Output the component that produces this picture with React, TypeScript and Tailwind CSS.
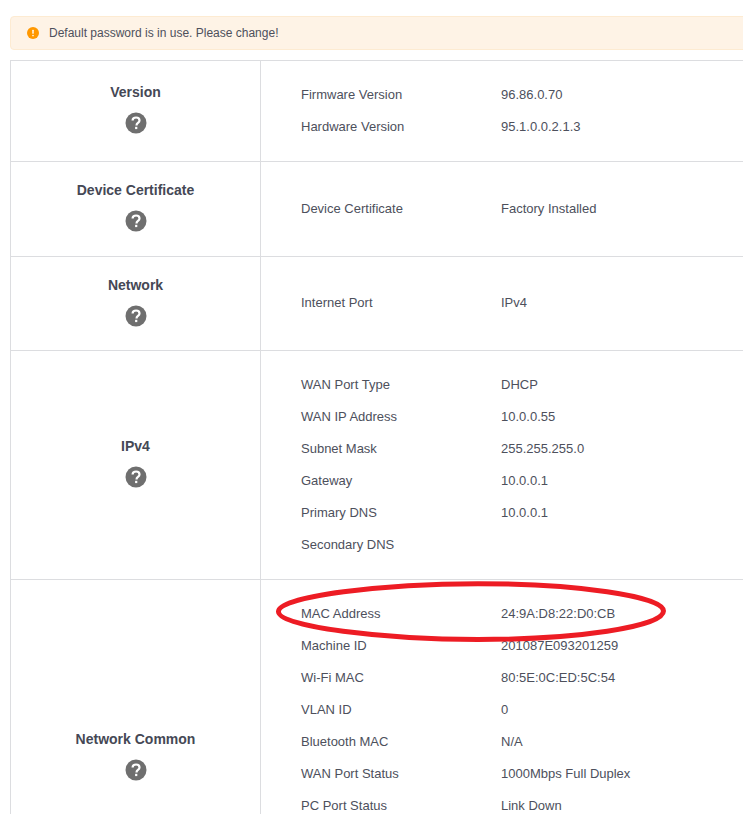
export default function App() {
  const sections = [
    { title: "Version", rowClass: "h-[101px]", leftClass: "pb-[7px]", rightClass: "", rows: [["Firmware Version", "96.86.0.70"], ["Hardware Version", "95.1.0.0.2.1.3"]] },
    { title: "Device Certificate", rowClass: "h-[95px]", leftClass: "pb-[7px]", rightClass: "", rows: [["Device Certificate", "Factory Installed"]] },
    { title: "Network", rowClass: "h-[94px]", leftClass: "pb-[5px]", rightClass: "pb-[2px]", rows: [["Internet Port", "IPv4"]] },
    { title: "IPv4", rowClass: "h-[229px]", leftClass: "pb-[7px]", rightClass: "", rows: [["WAN Port Type", "DHCP"], ["WAN IP Address", "10.0.0.55"], ["Subnet Mask", "255.255.255.0"], ["Gateway", "10.0.0.1"], ["Primary DNS", "10.0.0.1"], ["Secondary DNS", ""]] },
    { title: "Network Common", rowClass: "h-[357px]", leftClass: "pb-[7px]", rightClass: "pb-[96px]", rows: [["MAC Address", "24:9A:D8:22:D0:CB"], ["Machine ID", "201087E093201259"], ["Wi-Fi MAC", "80:5E:0C:ED:5C:54"], ["VLAN ID", "0"], ["Bluetooth MAC", "N/A"], ["WAN Port Status", "1000Mbps Full Duplex"], ["PC Port Status", "Link Down"]] },
  ];
  return (
    <div className="relative h-[814px] w-[743px] overflow-hidden bg-white font-['Liberation_Sans',Arial,sans-serif] text-[13px] text-[#4d505c]">
      <div className="w-[800px] pl-[10px] pt-[16px]">
        <div className="flex h-[34px] items-center rounded-[4px] border border-[#fdebd2] bg-[#fef3e6] pl-[16px] text-[12px]">
          <svg viewBox="0 0 12 12" className="mr-[10px] h-[12px] w-[12px] shrink-0">
            <circle cx="6" cy="6" r="6" fill="#ff9800" />
            <rect x="5.3" y="2.8" width="1.4" height="4" rx="0.5" fill="#fff" />
            <circle cx="6" cy="8.6" r="0.8" fill="#fff" />
          </svg>
          <span>Default password is in use. Please change!</span>
        </div>
        <div className="mt-[10px] border-l border-t border-[#dcdde0]">
          {sections.map((s) => (
            <div key={s.title} className={`flex border-b border-[#dcdde0] ${s.rowClass}`}>
              <div className={`flex w-[250px] shrink-0 flex-col items-center justify-center border-r border-[#dcdde0] ${s.leftClass}`}>
                <div className="text-[14px] font-bold leading-[20px] text-[#454855]">{s.title}</div>
                <svg viewBox="0 0 22 22" className="mt-[10px] h-[22px] w-[22px]">
                  <circle cx="11" cy="11" r="10.5" fill="#6f6f6f" />
                  <path d="M7.6 8.6c0-2 1.5-3.1 3.5-3.1s3.4 1.1 3.4 2.9c0 2.6-3 2.5-3 5" fill="none" stroke="#fff" strokeWidth="2.2" />
                  <rect x="10.1" y="14.8" width="2.2" height="2.3" fill="#fff" />
                </svg>
              </div>
              <div className={`flex flex-1 flex-col justify-center pl-[40px] ${s.rightClass}`}>
                {s.rows.map(([k, v]) => (
                  <div key={k} className="flex h-[32px] shrink-0 items-center">
                    <div className="w-[200px] shrink-0">{k}</div>
                    <div>{v}</div>
                  </div>
                ))}
              </div>
            </div>
          ))}
        </div>
      </div>
      <svg viewBox="0 0 743 814" className="pointer-events-none absolute left-0 top-0 h-[814px] w-[743px]">
        <path d="M278.5 611.5C279 596 385 583.7 478 583.7C575 583.7 663.5 596 663.5 611C663.5 627 575 639.5 478 639.5C385 639.5 278 627 278.5 611.5Z" fill="none" stroke="#ed1c24" strokeWidth="5" strokeLinejoin="round" />
      </svg>
    </div>
  );
}
